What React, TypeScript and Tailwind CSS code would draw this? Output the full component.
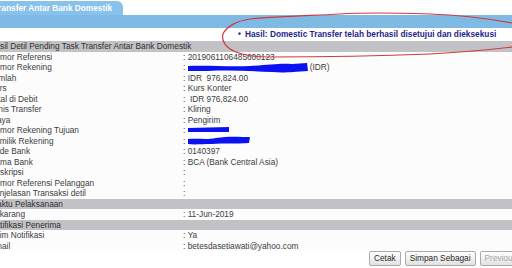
import React from "react";

type Row = { label: string; value?: React.ReactNode; gray?: boolean };

const Blob = ({ w, h, d }: { w: number; h: number; d: string }) => (
  <svg width={w} height={h} viewBox={`0 0 ${w} ${h}`} className="inline-block shrink-0">
    <path d={d} fill="#0b12f2" />
  </svg>
);

const rows: Row[] = [
  { label: "Nomor Referensi", value: "2019061106485600123" },
  {
    label: "Nomor Rekening",
    value: (
      <>
        <Blob w={120} h={11} d="M0 4 C18 3 40 5 62 4 C80 3 92 1 104 2 L119 1 L120 9 C104 10 96 11 84 10 C64 9 40 8 20 9 C10 9 4 9 0 9 Z" />
        <span className="ml-[2px]">(IDR)</span>
      </>
    ),
  },
  { label: "Jumlah", value: "IDR  976,824.00" },
  { label: "Kurs", value: "Kurs Konter" },
  { label: "Total di Debit", value: " IDR 976,824.00" },
  { label: "Jenis Transfer", value: "Kliring" },
  { label: "Biaya", value: "Pengirim" },
  {
    label: "Nomor Rekening Tujuan",
    value: <Blob w={41} h={6} d="M0 1 L41 0 L41 5 L0 5 Z" />,
  },
  {
    label: "Pemilik Rekening",
    value: <Blob w={62} h={9} d="M0 3 C10 2 18 4 28 2 C40 0 52 1 62 1 L61 7 C48 8 36 7 24 8 C14 8 6 9 0 8 Z" />,
  },
  { label: "Kode Bank", value: "0140397" },
  { label: "Nama Bank", value: "BCA (Bank Central Asia)" },
  { label: "Deskripsi", value: "" },
  { label: "Nomor Referensi Pelanggan", value: "" },
  { label: "Penjelasan Transaksi detil", value: "" },
  { label: "Waktu Pelaksanaan", gray: true },
  { label: "Sekarang", value: "11-Jun-2019" },
  { label: "Notifikasi Penerima", gray: true },
  { label: "Kirim Notifikasi", value: "Ya" },
  { label: "Email", value: "betesdasetiawati@yahoo.com" },
];

function Button({ children, disabled }: { children: React.ReactNode; disabled?: boolean }) {
  return (
    <button
      className={
        "h-[15px] shrink-0 whitespace-nowrap rounded-[2px] border border-[#a9a9a9] bg-gradient-to-b from-white to-[#e2e2e2] px-[4px] text-[8.3px] leading-[13px] " +
        (disabled ? "text-[#a6a6a6]" : "text-[#2a2a2a]")
      }
    >
      {children}
    </button>
  );
}

export default function App() {
  return (
    <div className="relative h-[268px] w-[512px] overflow-hidden bg-white font-['Liberation_Sans',Arial,sans-serif] text-[8.3px] text-[#3c3c3c]">
      {/* tab */}
      <div className="pt-[1px]">
        <div className="flex h-[14px]">
          <div className="w-[123px] overflow-hidden rounded-tr-[6px] bg-[#88c1e9]">
            <span className="ml-[-6.5px] block whitespace-nowrap font-bold leading-[14px] text-white">
              Transfer Antar Bank Domestik
            </span>
          </div>
        </div>
      </div>
      <div className="h-[13px] bg-[#7fbae4]" />

      {/* result message */}
      <div className="flex h-[13px] items-center pl-[234px] font-bold text-[#24248c]">
        <span className="w-[11px] text-center">•</span>
        <span className="whitespace-nowrap">Hasil: Domestic Transfer telah berhasil disetujui dan dieksekusi</span>
      </div>

      {/* detail table */}
      <div className="flex h-[10.5px] items-center bg-[#c2c2c6] text-[#2e2e2e]">
        <span className="ml-[-10.5px] whitespace-nowrap">Hasil Detil Pending Task Transfer Antar Bank Domestik</span>
      </div>
      {rows.map((r) =>
        r.gray ? (
          <div key={r.label} className="flex h-[10.5px] items-center bg-[#c2c2c6] text-[#2e2e2e]">
            <span className="ml-[-10.5px] whitespace-nowrap">{r.label}</span>
          </div>
        ) : (
          <div key={r.label} className="flex h-[10.5px] items-center bg-[#fcfcfc]">
            <span className="ml-[-10.5px] w-[193.5px] shrink-0 whitespace-nowrap">{r.label}</span>
            <span className="whitespace-pre">: </span>
            {typeof r.value === "string" ? (
              <span className="whitespace-pre">{r.value}</span>
            ) : (
              <span className="flex items-center">{r.value}</span>
            )}
          </div>
        )
      )}

      {/* buttons */}
      <div className="flex gap-[4px] pl-[369px]">
        <Button>Cetak</Button>
        <Button>Simpan Sebagai</Button>
        <Button disabled>Previous</Button>
      </div>

      {/* hand-drawn red circle */}
      <svg className="pointer-events-none absolute left-0 top-0" width={512} height={268}>
        <path
          d="M512 23 C490 19 460 15 430 14 C400 13 370 12 340 14 C300 16 270 17 250 19 C236 21 226 27 223 34 C221 41 226 48 236 52 C246 56 256 57 268 57 C320 57 380 56 430 54 C470 52 495 49 512 47"
          fill="none"
          stroke="#d23a3a"
          strokeWidth={1.2}
        />
      </svg>
    </div>
  );
}
